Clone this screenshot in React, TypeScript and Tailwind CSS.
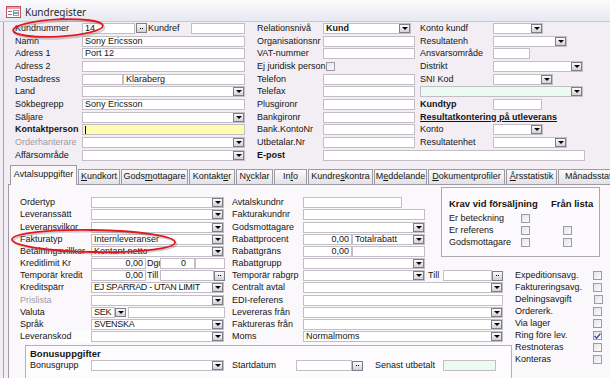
import type { ReactNode } from "react"

function Dd({ cls = "" }: { cls?: string }) {
  return (
    <div className={`flex h-[9px] w-[11px] shrink-0 items-end justify-center border border-[#7f7d88] bg-gradient-to-b from-[#fbfbfb] to-[#d2d1d8] pb-[2px] ${cls}`}>
      <svg width="6" height="3" viewBox="0 0 6 3">
        <path d="M0 0H6L3 3Z" fill="#000" />
      </svg>
    </div>
  )
}

function Dots() {
  return (
    <div className="flex h-[10px] w-[11px] shrink-0 items-center justify-center gap-[1px] border border-[#7f7d88] bg-gradient-to-b from-[#fbfbfb] to-[#d2d1d8]">
      <span className="h-[1px] w-[1px] bg-black" />
      <span className="h-[1px] w-[1px] bg-black" />
    </div>
  )
}

function F({ w, children, bg = "bg-white", cls = "" }: { w: string; children?: ReactNode; bg?: string; cls?: string }) {
  return (
    <div className={`flex h-[11px] shrink-0 items-center overflow-hidden whitespace-nowrap border border-[#c3bec6] px-[2px] ${bg} ${w} ${cls}`}>
      {children}
    </div>
  )
}

function Cb({ w, children, bg = "bg-white", cls = "" }: { w: string; children?: ReactNode; bg?: string; cls?: string }) {
  return (
    <div className={`flex h-[11px] shrink-0 items-center border border-[#c3bec6] pl-[2px] ${bg} ${w} ${cls}`}>
      <span className="flex-1 overflow-hidden whitespace-nowrap">{children}</span>
      <Dd />
    </div>
  )
}

function L({ w = "w-[78px]", pl = "", cls = "", children }: { w?: string; pl?: string; cls?: string; children?: ReactNode }) {
  return <div className={`shrink-0 whitespace-nowrap ${w} ${pl} ${cls}`}>{children}</div>
}

function R({ h = "h-[12.7px]", cls = "", children }: { h?: string; cls?: string; children?: ReactNode }) {
  return <div className={`flex items-center ${h} ${cls}`}>{children}</div>
}

function Chk({ on = false, cls = "" }: { on?: boolean; cls?: string }) {
  return (
    <div className={`flex h-[9px] w-[9px] shrink-0 items-center justify-center border border-[#9d9ba3] bg-gradient-to-br from-[#e4e3e8] to-[#fbfbfb] ${cls}`}>
      {on && (
        <svg width="7" height="6" viewBox="0 0 7 6">
          <path d="M0.6 3L2.6 5.1L6.4 0.6" fill="none" stroke="#2b3fa6" strokeWidth="1.3" />
        </svg>
      )}
    </div>
  )
}

function Tab({ w, sel = false, children }: { w: string; sel?: boolean; children: ReactNode }) {
  if (sel)
    return (
      <div className={`relative z-10 -mb-px flex h-[20px] shrink-0 items-center justify-center border border-b-0 border-[#9c9aa2] bg-[#fbf8fb] pb-[1px] ${w}`}>
        {children}
      </div>
    )
  return (
    <div className={`flex h-[15px] shrink-0 items-center justify-center overflow-hidden whitespace-nowrap border border-b-0 border-[#9c9aa2] bg-gradient-to-b from-[#fbfbfb] to-[#e2e1e6] ${w}`}>
      {children}
    </div>
  )
}

function FormIcon() {
  return (
    <svg width="15" height="12" viewBox="0 0 15 12">
      <rect x="0.5" y="0.5" width="14" height="11" fill="#fff" stroke="#c4505c" />
      <rect x="1" y="1" width="13" height="2" fill="#e3a0aa" />
      <rect x="2" y="5" width="4" height="1" fill="#7c7c92" />
      <rect x="7.5" y="4.5" width="5" height="2" fill="none" stroke="#7c7c92" strokeWidth="0.8" />
      <rect x="2" y="8" width="4" height="1" fill="#7c7c92" />
      <rect x="7.5" y="7.5" width="5" height="2" fill="none" stroke="#7c7c92" strokeWidth="0.8" />
    </svg>
  )
}

const tr = "h-[12.2px]"

export default function App() {
  return (
    <div className="relative h-[378px] w-[610px] overflow-hidden bg-[#f3eef4] font-['Liberation_Sans',Arial,sans-serif] text-[9px] leading-none text-[#151515]">
      {/* title */}
      <div className="flex h-[22px] items-center gap-[4px] border-b border-[#c6c8d2] bg-gradient-to-b from-[#fcfcfe] to-[#e7e9f1] pl-[6px] pt-[2px]">
        <FormIcon />
        <span className="font-['Noto_Sans',sans-serif] text-[10px] text-[#2a2a2a]">Kundregister</span>
      </div>

      <div className="ml-[3px] border-l border-[#a8a4ad]">
        {/* top section */}
        <div className="flex">
          <div className="flex flex-col">
            <R>
              <L pl="pl-[11px]">Kundnummer</L>
              <F w="w-[53px]">14</F>
              <div className="ml-[1px]"><Dots /></div>
              <L w="w-[44px]" pl="pl-[1px]">Kundref</L>
              <F w="w-[54px]" />
            </R>
            <R><L pl="pl-[11px]">Namn</L><F w="w-[163px]">Sony Ericsson</F></R>
            <R><L pl="pl-[11px]">Adress 1</L><F w="w-[163px]">Port 12</F></R>
            <R><L pl="pl-[11px]">Adress 2</L><F w="w-[163px]" /></R>
            <R>
              <L pl="pl-[11px]">Postadress</L>
              <F w="w-[41px]" />
              <F w="w-[122px]">Klaraberg</F>
            </R>
            <R><L pl="pl-[11px]">Land</L><Cb w="w-[163px]" /></R>
            <R><L pl="pl-[11px]">Sökbegrepp</L><F w="w-[163px]">Sony Ericsson</F></R>
            <R><L pl="pl-[11px]">Säljare</L><Cb w="w-[163px]" /></R>
            <R>
              <L pl="pl-[11px]" cls="font-bold">Kontaktperson</L>
              <F w="w-[163px]" bg="bg-[#fdfdb2]"><span className="h-[8px] w-[1px] bg-black" /></F>
            </R>
            <R><L pl="pl-[11px]" cls="text-[#a09ca6]">Orderhanterare</L><Cb w="w-[163px]" /></R>
            <R><L pl="pl-[11px]">Affärsområde</L><Cb w="w-[163px]" /></R>
          </div>

          <div className="flex flex-col">
            <div className="flex">
              <div className="flex flex-col">
                <R><L pl="pl-[12px]">Relationsnivå</L><Cb w="w-[88px]"><b>Kund</b></Cb></R>
                <R><L pl="pl-[12px]">Organisationsnr</L><F w="w-[92px]" /></R>
                <R><L pl="pl-[12px]">VAT-nummer</L><F w="w-[92px]" /></R>
                <R><L pl="pl-[12px]">Ej juridisk person</L><Chk cls="ml-[3px]" /><div className="w-[80px]" /></R>
                <R><L pl="pl-[12px]">Telefon</L><F w="w-[92px]" /></R>
                <R><L pl="pl-[12px]">Telefax</L><F w="w-[92px]" /></R>
                <R><L pl="pl-[12px]">Plusgironr</L><F w="w-[92px]" /></R>
                <R><L pl="pl-[12px]">Bankgironr</L><F w="w-[92px]" /></R>
                <R><L pl="pl-[12px]">Bank.KontoNr</L><F w="w-[92px]" /></R>
                <R><L pl="pl-[12px]">Utbetalar.Nr</L><F w="w-[92px]" /></R>
              </div>
              <div className="flex flex-col">
                <R><L pl="pl-[5px]">Konto kundf</L><Cb w="w-[50px]" /></R>
                <R><L pl="pl-[5px]">Resultatenh</L><Cb w="w-[74px]" /></R>
                <R><L pl="pl-[5px]">Ansvarsområde</L><F w="w-[37px]" /></R>
                <R><L pl="pl-[5px]">Distrikt</L><Cb w="w-[90px]" /></R>
                <R><L pl="pl-[5px]">SNI Kod</L><Cb w="w-[60px]" /></R>
                <R cls="pl-[5px]"><Cb w="w-[163px]" bg="bg-[#ebfbf1]" /></R>
                <R><L pl="pl-[5px]" cls="font-bold">Kundtyp</L><F w="w-[49px]" /></R>
                <R cls="pl-[5px]"><span className="font-bold underline">Resultatkontering på utleverans</span></R>
                <R><L pl="pl-[5px]">Konto</L><Cb w="w-[50px]" /></R>
                <R><L pl="pl-[5px]">Resultatenhet</L><Cb w="w-[74px]" /></R>
              </div>
            </div>
            <R><L pl="pl-[12px]" cls="font-bold">E-post</L><F w="w-[262px]" /></R>
          </div>
        </div>

        {/* tabs */}
        <div className="flex h-[22px] items-end gap-[1px] pl-[6px]">
          <Tab w="w-[67px]" sel>Avtalsuppgifter</Tab>
          <Tab w="w-[42px]"><span><u>K</u>undkort</span></Tab>
          <Tab w="w-[67px]"><span>Gods<u>m</u>ottagare</span></Tab>
          <Tab w="w-[46px]"><span>Kontakt<u>e</u>r</span></Tab>
          <Tab w="w-[37px]"><span>N<u>y</u>cklar</span></Tab>
          <Tab w="w-[33px]"><span>In<u>f</u>o</span></Tab>
          <Tab w="w-[65px]"><span>Kundre<u>s</u>kontra</span></Tab>
          <Tab w="w-[53px]"><span>M<u>e</u>ddelande</span></Tab>
          <Tab w="w-[77px]"><span><u>D</u>okumentprofiler</span></Tab>
          <Tab w="w-[51px]"><span><u>Å</u>rsstatistik</span></Tab>
          <Tab w="w-[70px]"><span className="pl-[6px]">Månadsstatistik</span></Tab>
        </div>

        {/* panel */}
        <div className="ml-[4px] h-[200px] border-l border-t border-[#9c9aa2] bg-[#fbf8fb]">
          <div className="flex">
            <div className="ml-[11px] flex w-[205px] shrink-0 flex-col pt-[12px]">
              <R h={tr}><L w="w-[71px]">Ordertyp</L><Cb w="w-[133px]" /></R>
              <R h={tr}><L w="w-[71px]">Leveranssätt</L><Cb w="w-[133px]" /></R>
              <R h={tr}><L w="w-[71px]">Leveransvilkor</L><Cb w="w-[133px]" /></R>
              <R h={tr}><L w="w-[71px]">Fakturatyp</L><Cb w="w-[133px]">Internleveranser</Cb></R>
              <R h={tr}><L w="w-[71px]">Betalningsvillkor</L><Cb w="w-[133px]">Kontant netto</Cb></R>
            </div>
            <div className="ml-[7px] flex w-[193px] shrink-0 flex-col pt-[12px]">
              <R h={tr}><L w="w-[71px]">Avtalskundnr</L><F w="w-[99px]" /></R>
              <R h={tr}><L w="w-[71px]">Fakturakundnr</L><F w="w-[122px]" /></R>
              <R h={tr}><L w="w-[71px]">Godsmottagare</L><Cb w="w-[122px]" /></R>
              <R h={tr}>
                <L w="w-[71px]">Rabattprocent</L>
                <F w="w-[49px]" cls="justify-end">0,00</F>
                <Cb w="w-[73px]">Totalrabatt</Cb>
              </R>
              <R h={tr}>
                <L w="w-[71px]">Rabattgräns</L>
                <F w="w-[49px]" cls="justify-end">0,00</F>
                <F w="w-[73px]" />
              </R>
            </div>
            <div className="ml-[16px] mt-[2px] h-[70px] w-[159px] shrink-0 border border-[#aaa7b0] bg-[#fcfafc] pl-[7px] pt-[10px]">
              <div className="flex h-[12px] items-center text-[9.5px] font-bold">
                <span className="w-[102px]">Krav vid försäljning</span>
                <span>Från lista</span>
              </div>
              <div className="mt-[3px]">
                <R h="h-[12px]"><L w="w-[72px]">Er beteckning</L><Chk /></R>
                <R h="h-[12px]"><L w="w-[72px]">Er referens</L><Chk /><Chk cls="ml-[33px]" /></R>
                <R h="h-[12px]"><L w="w-[72px]">Godsmottagare</L><Chk /><Chk cls="ml-[33px]" /></R>
              </div>
            </div>
          </div>

          <div className="flex">
            <div className="w-[506px] shrink-0">
              <div className="flex">
                <div className="ml-[11px] flex w-[205px] shrink-0 flex-col">
                  <R h={tr}>
                    <L w="w-[71px]">Kreditlimit Kr</L>
                    <F w="w-[55px]" cls="justify-end">0,00</F>
                    <L w="w-[14px]" pl="pl-[1px]">Dgr</L>
                    <F w="w-[35px]" cls="justify-end pr-[8px]">0</F>
                    <F w="w-[30px]" />
                  </R>
                  <R h={tr}>
                    <L w="w-[71px]">Temporär kredit</L>
                    <F w="w-[55px]" cls="justify-end">0,00</F>
                    <L w="w-[14px]" pl="pl-[1px]">Till</L>
                    <F w="w-[54px]" />
                    <Dots />
                  </R>
                  <R h={tr}>
                    <L w="w-[71px]">Kreditspärr</L>
                    <Cb w="w-[133px]"><span className="tracking-[-0.35px]">EJ SPÄRRAD - UTAN LIMIT</span></Cb>
                  </R>
                  <R h={tr}><L w="w-[71px]" cls="text-[#a09ca6]">Prislista</L><Cb w="w-[133px]" /></R>
                  <R h={tr}>
                    <L w="w-[71px]">Valuta</L>
                    <F w="w-[24px]"><span className="tracking-[-0.3px]">SEK</span></F>
                    <Dd />
                    <F w="w-[97px]" cls="ml-[2px]" />
                  </R>
                  <R h={tr}>
                    <L w="w-[71px]">Språk</L>
                    <Cb w="w-[133px]"><span className="tracking-[-0.3px]">SVENSKA</span></Cb>
                  </R>
                  <R h={tr}>
                    <L w="w-[71px]" cls="flex h-full items-center bg-white/70">Leveranskod</L>
                    <Cb w="w-[133px]" />
                  </R>
                </div>
                <div className="ml-[7px] flex flex-col">
                  <R h={tr}><L w="w-[71px]">Rabattgrupp</L><Cb w="w-[122px]" /></R>
                  <R h={tr}>
                    <L w="w-[71px]">Temporär rabgrp</L>
                    <Cb w="w-[122px]" />
                    <L w="w-[15px]" cls="ml-[3px]">Till</L>
                    <F w="w-[49px]" />
                    <Dots />
                  </R>
                  <R h={tr}><L w="w-[71px]">Centralt avtal</L><Cb w="w-[200px]" /></R>
                  <R h={tr}><L w="w-[71px]">EDI-referens</L><F w="w-[200px]" /></R>
                  <R h={tr}><L w="w-[71px]">Levereras från</L><Cb w="w-[200px]" /></R>
                  <R h={tr}><L w="w-[71px]">Faktureras från</L><Cb w="w-[200px]" /></R>
                  <R h={tr}><L w="w-[71px]">Moms</L><Cb w="w-[200px]">Normalmoms</Cb></R>
                </div>
              </div>

              <div className="ml-[16px] mt-[2px] h-[36px] w-[487px] border border-[#b3b0b8] bg-[#fdfbfd] pl-[4px] pt-[2px]">
                <div className="flex h-[12px] items-center text-[9.5px] font-bold">Bonusuppgifter</div>
                <R h="h-[11.5px]">
                  <L w="w-[61px]">Bonusgrupp</L>
                  <Cb w="w-[133px]" />
                  <L w="w-[64px]" cls="ml-[8px]">Startdatum</L>
                  <F w="w-[56px]" />
                  <Dots />
                  <L w="w-[68px]" cls="ml-[12px]">Senast utbetalt</L>
                  <F w="w-[53px]" bg="bg-[#ebfbf1]" />
                </R>
              </div>
            </div>

            <div className="flex flex-col pt-[12px]">
              <R h="h-[12px]"><L w="w-[78px]">Expeditionsavg.</L><Chk /></R>
              <R h="h-[12px]"><L w="w-[78px]">Faktureringsavg.</L><Chk /></R>
              <R h="h-[12px]"><L w="w-[78px]">Delningsavgift</L><Chk cls="ml-[1px]" /></R>
              <R h="h-[12px]"><L w="w-[78px]">Ordererk.</L><Chk /></R>
              <R h="h-[12px]"><L w="w-[78px]">Via lager</L><Chk /></R>
              <R h="h-[12px]"><L w="w-[78px]">Ring före lev.</L><Chk on /></R>
              <R h="h-[12px]"><L w="w-[78px]">Restnoteras</L><Chk /></R>
              <R h="h-[12px]"><L w="w-[78px]">Konteras</L><Chk /></R>
            </div>
          </div>
        </div>
      </div>

      {/* red annotation rings */}
      <svg className="pointer-events-none absolute left-0 top-0" width="610" height="378">
        <ellipse cx="59.5" cy="29.8" rx="45" ry="8.6" fill="none" stroke="#777" strokeOpacity="0.35" strokeWidth="2" transform="rotate(-3 59.5 29.8)" />
        <ellipse cx="58" cy="28" rx="45" ry="8.6" fill="none" stroke="#e1191f" strokeWidth="1.8" transform="rotate(-3 58 28)" />
        <ellipse cx="95" cy="242.5" rx="81.5" ry="11" fill="none" stroke="#777" strokeOpacity="0.35" strokeWidth="2" transform="rotate(1 95 242.5)" />
        <ellipse cx="93.5" cy="241" rx="81.5" ry="11" fill="none" stroke="#e1191f" strokeWidth="1.8" transform="rotate(1 93.5 241)" />
      </svg>
    </div>
  )
}
